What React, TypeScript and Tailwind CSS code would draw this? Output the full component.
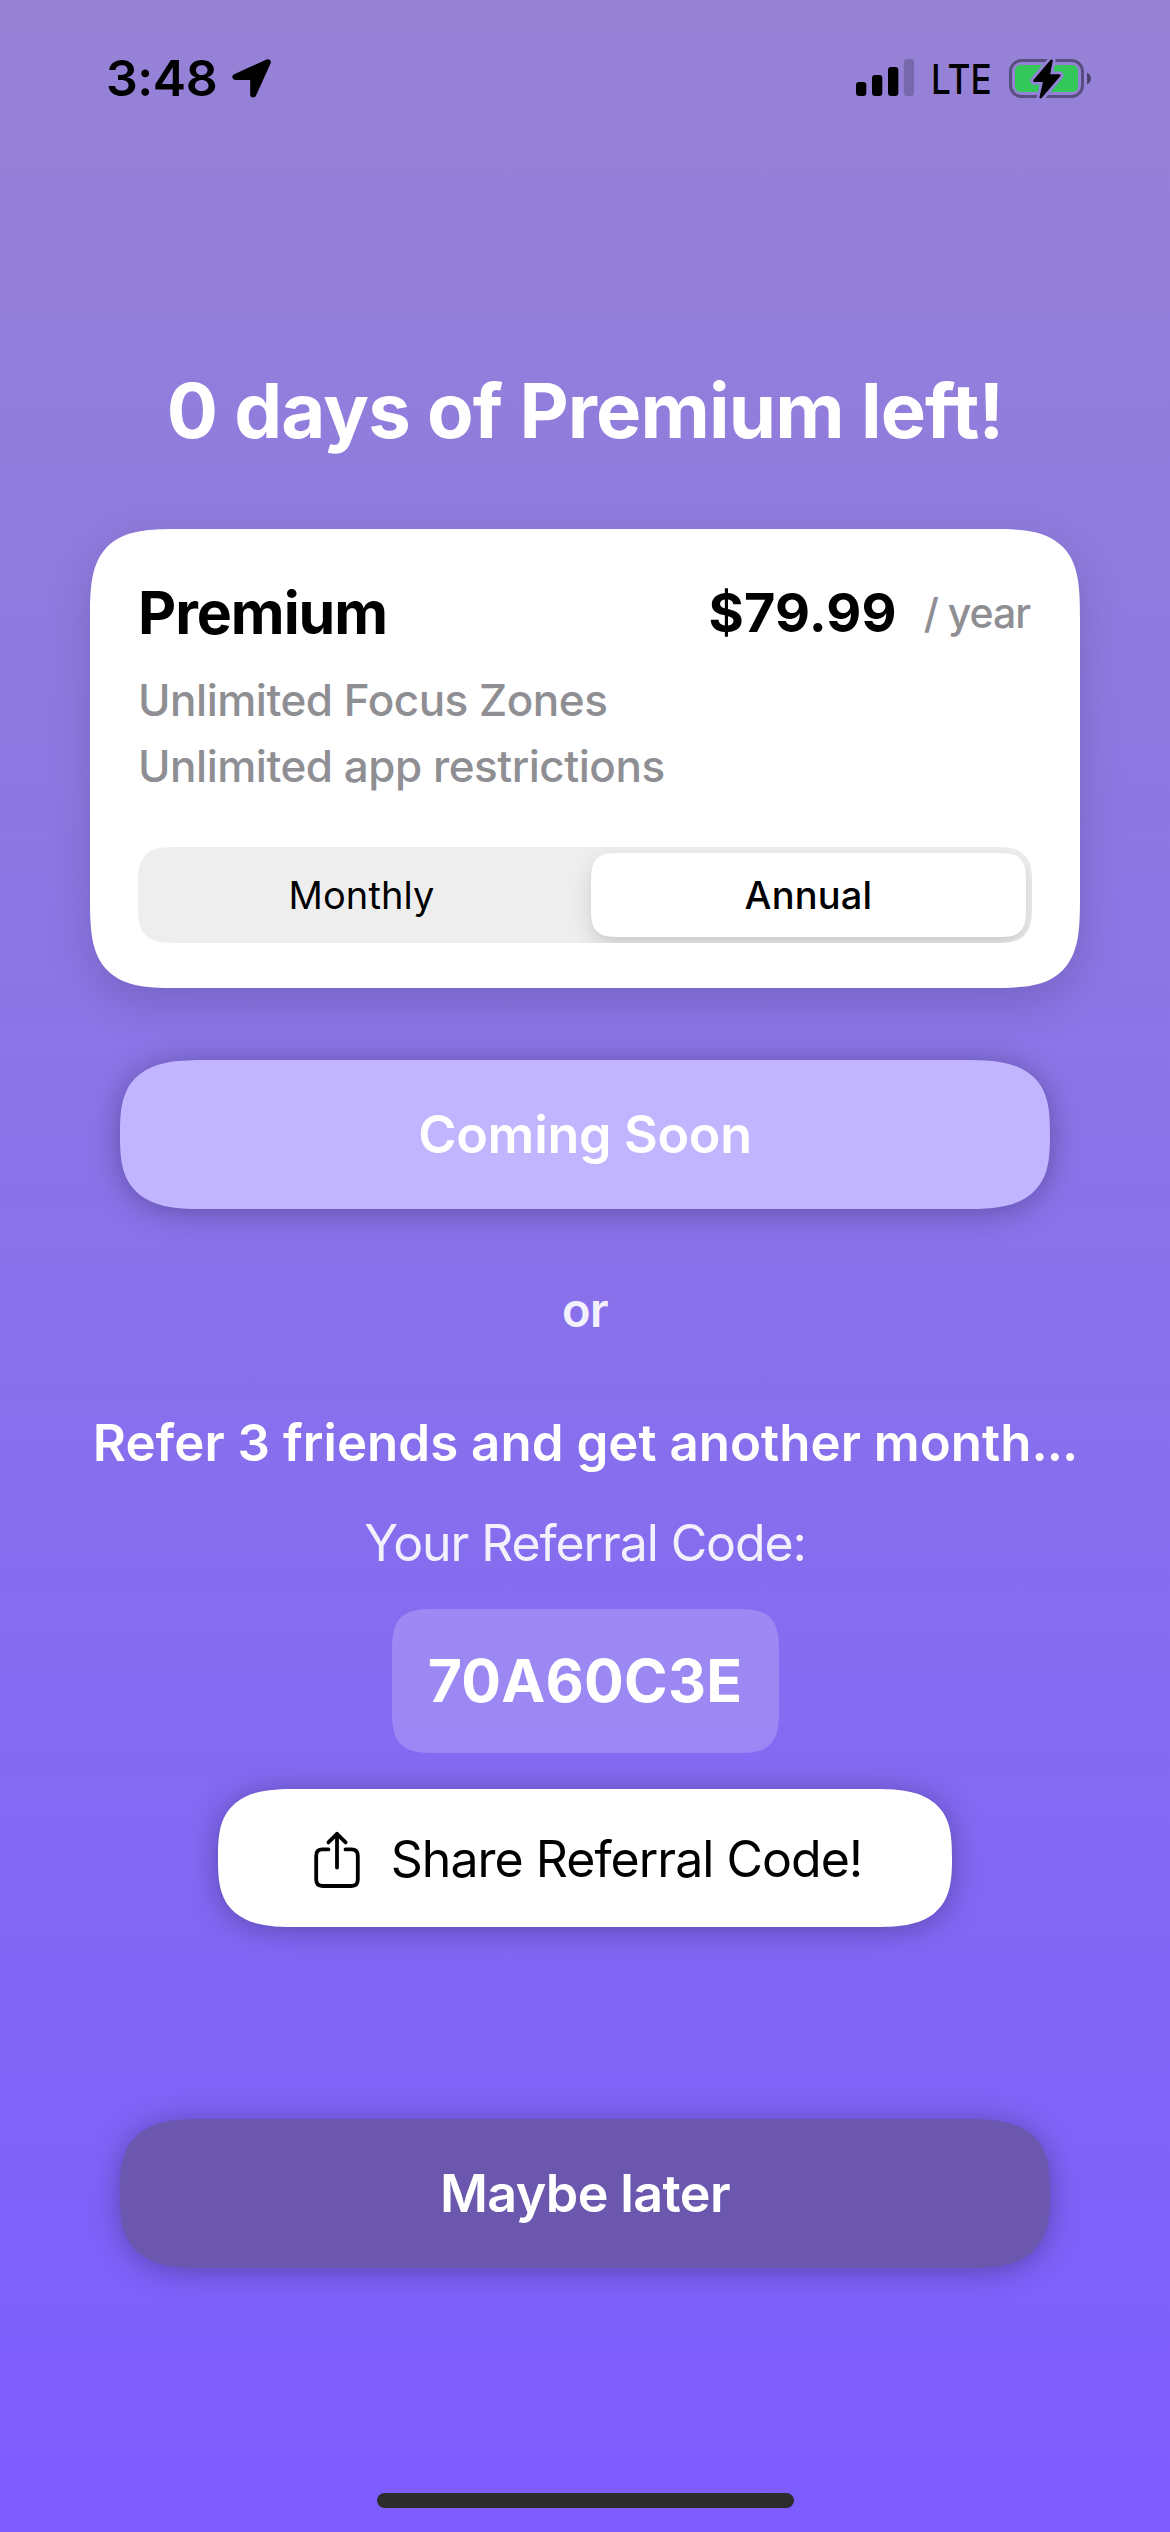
import type { ReactNode } from 'react'

function LocationArrow() {
  return (
    <svg width="39" height="39" viewBox="0 0 39 39" className="block">
      <path
        d="M35.8 3.2 L3.4 17.9 H21.2 V35.6 Z"
        fill="#000"
        stroke="#000"
        strokeWidth="6"
        strokeLinejoin="round"
      />
    </svg>
  )
}

function SignalBars() {
  return (
    <svg width="58" height="38" viewBox="0 0 58 38" className="block">
      <rect x="0" y="23" width="10.3" height="14" rx="3" />
      <rect x="16" y="16" width="10.3" height="21" rx="3" />
      <rect x="32" y="8" width="10.3" height="29" rx="3" />
      <rect x="47.8" y="0" width="10.2" height="37" rx="3" opacity="0.2" />
    </svg>
  )
}

function Battery() {
  const bolt = 'M42.6 2.6 L25.3 22.7 H35.5 L31.7 39.3 L50.3 17.4 H39.6 Z'
  return (
    <svg width="83" height="41" viewBox="0 0 83 41" className="block">
      <rect x="1.5" y="2.5" width="72" height="36" rx="11" fill="none" stroke="#000" strokeOpacity="0.4" strokeWidth="3" />
      <path d="M78 14.5 C83.3 17 83.3 24 78 26.5 Z" opacity="0.5" />
      <rect x="6" y="7" width="63" height="27" rx="5.5" fill="#34c759" />
      <path d={bolt} fill="#9481d8" stroke="#9481d8" strokeWidth="8" strokeLinejoin="round" />
      <path d={bolt} fill="#000" stroke="#000" strokeWidth="2.4" strokeLinejoin="round" />
    </svg>
  )
}

function ShareIcon() {
  return (
    <svg
      width="46"
      height="58"
      viewBox="0 0 46 58"
      fill="none"
      stroke="#000"
      strokeWidth="3.8"
      strokeLinecap="round"
      strokeLinejoin="round"
      className="relative top-[2px] block"
    >
      <path d="M14.5 18.4 H8.6 Q2.2 18.4 2.2 24.8 V48.6 Q2.2 55 8.6 55 H37.4 Q43.8 55 43.8 48.6 V24.8 Q43.8 18.4 37.4 18.4 H31.5" />
      <path d="M23 36.5 V3.2" />
      <path d="M14.4 11.4 L23 2.8 L31.6 11.4" />
    </svg>
  )
}

function StatusBar() {
  return (
    <header className="flex h-[156px] w-full shrink-0 items-center pr-[78px] pl-[106px] text-black">
      <span className="text-[50px] leading-[60px] font-semibold tracking-[-0.45px]">3:48</span>
      <div className="ml-[15px]">
        <LocationArrow />
      </div>
      <div className="ml-auto flex items-center">
        <SignalBars />
        <div className="ml-[19px] flex w-[57px] justify-center">
          <span className="relative top-px scale-x-[0.86] text-[41px] leading-[50px] font-medium">LTE</span>
        </div>
        <div className="ml-[19px]">
          <Battery />
        </div>
      </div>
    </header>
  )
}

function PillButton({ className, children }: { className: string; children: ReactNode }) {
  return (
    <button
      className={`flex shrink-0 items-center justify-center rounded-[86px/74px] [corner-shape:superellipse(1.55)] shadow-[0_3px_30px_rgba(0,0,0,0.3)] ${className}`}
    >
      {children}
    </button>
  )
}

function PlanCard() {
  return (
    <section className="mt-[73px] flex h-[459px] w-[990px] shrink-0 flex-col rounded-[92px] bg-white px-[48px] pt-[48px] shadow-[0_15px_45px_rgba(0,0,0,0.15)] [corner-shape:superellipse(1.71)]">
      <div className="flex items-center pr-[2px] leading-[72px]">
        <h2 className="text-[59px] font-bold tracking-[-1.04px] text-black">Premium</h2>
        <span className="ml-auto text-[54px] font-bold tracking-[0.17px] text-black">$79.99</span>
        <span className="ml-[27px] text-[41px] font-medium tracking-[-1.03px] text-[#8e8e93]">/ year</span>
      </div>
      <ul className="mt-[18px] text-[44px] leading-[66px] font-medium tracking-[-0.49px] text-[#8e8e93]">
        <li>Unlimited Focus Zones</li>
        <li>Unlimited app restrictions</li>
      </ul>
      <div className="mt-[48px] flex h-[96px] overflow-hidden rounded-[40px] bg-[#eeeeee] py-[6px] pr-[6px] text-[38px] text-black [corner-shape:superellipse(1.71)]">
        <button className="mr-[6px] flex-1 tracking-[0.09px]">Monthly</button>
        <button className="w-[435px] rounded-[30px] bg-white font-medium tracking-[0.18px] shadow-[0_9px_24px_rgba(0,0,0,0.12),0_6px_6px_rgba(0,0,0,0.03)] [corner-shape:superellipse(1.71)]">
          Annual
        </button>
      </div>
    </section>
  )
}

export default function App() {
  return (
    <main className="flex h-[2532px] w-[1170px] flex-col items-center overflow-hidden bg-linear-to-b from-[#9682d5] to-[#7d5cff] font-[Inter,sans-serif] whitespace-nowrap text-white">
      <StatusBar />
      <h1 className="mt-[208px] text-[76px] leading-[92px] font-bold tracking-[-0.84px]">0 days of Premium left!</h1>
      <PlanCard />
      <PillButton className="mt-[72px] h-[149px] w-[930px] bg-[#c2b5ff] text-[52px] font-semibold tracking-[-0.3px]">
        Coming Soon
      </PillButton>
      <p className="mt-[72px] text-[47px] leading-[58px] font-semibold tracking-[-0.6px] opacity-90">or</p>
      <p className="mt-[73px] text-[51px] leading-[62px] font-semibold tracking-[0.03px]">
        Refer 3 friends and get another month<span className="tracking-[-1px]">...</span>
      </p>
      <p className="mt-[39px] text-[50px] leading-[60px] tracking-[-1.11px] opacity-90">Your Referral Code:</p>
      <div className="mt-[36px] flex h-[144px] w-[387px] shrink-0 items-center justify-center rounded-[46px] bg-white/20 text-[59px] font-bold tracking-[0.2px] [corner-shape:superellipse(1.71)]">
        70A60C3E
      </div>
      <PillButton className="mt-[36px] h-[138px] w-[734px] bg-white pl-[6px] text-[50px] tracking-[-0.98px] text-black">
        <ShareIcon />
        <span className="relative top-px ml-[31px]">Share Referral Code!</span>
      </PillButton>
      <PillButton className="mt-[192px] h-[149px] w-[930px] bg-[#6b57ae] text-[52px] font-semibold tracking-[-0.61px]">
        Maybe later
      </PillButton>
      <div className="mt-auto mb-[24px] h-[15px] w-[417px] shrink-0 rounded-full bg-[#2c2c2c]" />
    </main>
  )
}
